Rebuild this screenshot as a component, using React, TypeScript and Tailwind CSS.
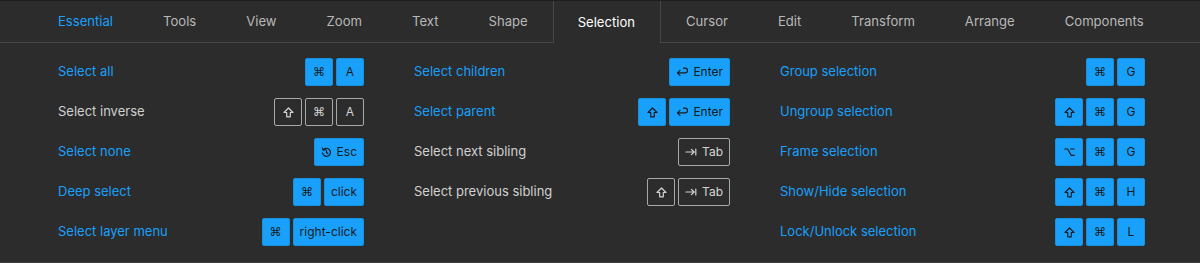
import type { ReactNode } from 'react';

type KeyDef = { label?: string; icon?: 'cmd' | 'shift' | 'enter' | 'esc' | 'tab' | 'opt' };
type Shortcut = { name: string; active: boolean; keys: KeyDef[] };

const tabs = ['Essential', 'Tools', 'View', 'Zoom', 'Text', 'Shape', 'Selection', 'Cursor', 'Edit', 'Transform', 'Arrange', 'Components'];

const cmd: KeyDef = { icon: 'cmd' };
const shift: KeyDef = { icon: 'shift' };

const columns: Shortcut[][] = [
    [
        { name: 'Select all', active: true, keys: [cmd, { label: 'A' }] },
        { name: 'Select inverse', active: false, keys: [shift, cmd, { label: 'A' }] },
        { name: 'Select none', active: true, keys: [{ icon: 'esc', label: 'Esc' }] },
        { name: 'Deep select', active: true, keys: [cmd, { label: 'click' }] },
        { name: 'Select layer menu', active: true, keys: [cmd, { label: 'right-click' }] },
    ],
    [
        { name: 'Select children', active: true, keys: [{ icon: 'enter', label: 'Enter' }] },
        { name: 'Select parent', active: true, keys: [shift, { icon: 'enter', label: 'Enter' }] },
        { name: 'Select next sibling', active: false, keys: [{ icon: 'tab', label: 'Tab' }] },
        { name: 'Select previous sibling', active: false, keys: [shift, { icon: 'tab', label: 'Tab' }] },
    ],
    [
        { name: 'Group selection', active: true, keys: [cmd, { label: 'G' }] },
        { name: 'Ungroup selection', active: true, keys: [shift, cmd, { label: 'G' }] },
        { name: 'Frame selection', active: true, keys: [{ icon: 'opt' }, cmd, { label: 'G' }] },
        { name: 'Show/Hide selection', active: true, keys: [shift, cmd, { label: 'H' }] },
        { name: 'Lock/Unlock selection', active: true, keys: [shift, cmd, { label: 'L' }] },
    ],
];

function KeyIcon({ icon }: { icon: NonNullable<KeyDef['icon']> }) {
    if (icon === 'cmd') {
        return <span className="text-[12px] leading-none" style={{ fontFamily: '"DejaVu Sans", sans-serif' }}>⌘</span>;
    }
    const common = { fill: 'none', stroke: 'currentColor', strokeWidth: 1.2, strokeLinejoin: 'round' as const, strokeLinecap: 'round' as const };
    if (icon === 'shift') {
        return (
            <svg width="11" height="11" viewBox="0 0 11 11">
                <path d="M5.5 1 L10 5.5 L7.3 5.5 L7.3 9.8 L3.7 9.8 L3.7 5.5 L1 5.5 Z" {...common} />
            </svg>
        );
    }
    if (icon === 'enter') {
        return (
            <svg width="12" height="10" viewBox="0 0 12 10">
                <path d="M7.5 1.2 H9.2 A2.3 2.3 0 0 1 9.2 5.8 H1.5 M4 3.3 L1.5 5.8 L4 8.3" {...common} />
            </svg>
        );
    }
    if (icon === 'tab') {
        return (
            <svg width="12" height="10" viewBox="0 0 12 10">
                <path d="M1 5 H9.2 M6.4 2.4 L9.2 5 L6.4 7.6 M10.8 2 V8" {...common} />
            </svg>
        );
    }
    if (icon === 'esc') {
        return (
            <svg width="11" height="11" viewBox="0 0 11 11">
                <path d="M2.2 3 A4 4 0 1 1 1.5 5.8 M1.4 1 L2.2 3.2 L4.4 2.6" {...common} />
                <path d="M5.5 3.6 V5.6 L6.8 6.6" {...common} />
            </svg>
        );
    }
    return (
        <svg width="11" height="10" viewBox="0 0 11 10">
            <path d="M0.8 2 H3.6 L7.2 8.4 H10.2 M6.6 2 H10.2" {...common} />
        </svg>
    );
}

function Key({ k, active }: { k: KeyDef; active: boolean }) {
    return (
        <span
            className={
                'h-[28px] min-w-[28px] px-[6px] rounded-[2px] flex items-center justify-center gap-[5px] text-[12px] ' +
                (active ? 'bg-[#18a0fb] text-[#1b1b1b] border border-[#1890e0]' : 'border border-[#a8a8a8] text-[#d4d4d4]')
            }
        >
            {k.icon && <KeyIcon icon={k.icon} />}
            {k.label}
        </span>
    );
}

function Row({ s }: { s: Shortcut }): ReactNode {
    return (
        <div className="h-[40px] flex items-center justify-between">
            <span className={'text-[13px] ' + (s.active ? 'text-[#18a0fb]' : 'text-[#d0d0d0]')}>{s.name}</span>
            <div className="flex gap-[3px]">
                {s.keys.map((k, i) => (
                    <Key key={i} k={k} active={s.active} />
                ))}
            </div>
        </div>
    );
}

export default function App() {
    return (
        <div
            className="w-[1200px] h-[263px] bg-[#2c2c2c] border-b border-[#3c3c3c] flex flex-col"
            style={{ fontFamily: 'Inter, "Liberation Sans", sans-serif' }}
        >
            <div className="flex h-[43px] border-t border-[#1f1f1f]">
                <div className="w-[33px] border-b border-[#474747]" />
                {tabs.map((t) => {
                    const selected = t === 'Selection';
                    return (
                        <div
                            key={t}
                            className={
                                'flex items-center pt-[1px] text-[13.1px] ' +
                                (selected
                                    ? 'text-white border-x border-[#474747] pl-[24px] pr-[25px]'
                                    : 'px-[25px] border-b border-[#474747] ' + (t === 'Essential' ? 'text-[#18a0fb]' : 'text-[#b8b8b8]'))
                            }
                        >
                            {t}
                        </div>
                    );
                })}
                <div className="flex-1 border-b border-[#474747]" />
            </div>

            <div className="grid grid-cols-[306px_316px_365px] gap-x-[50px] pl-[58px] pt-[9px]">
                {columns.map((col, i) => (
                    <div key={i} className="flex flex-col">
                        {col.map((s) => (
                            <Row key={s.name} s={s} />
                        ))}
                    </div>
                ))}
            </div>
        </div>
    );
}
